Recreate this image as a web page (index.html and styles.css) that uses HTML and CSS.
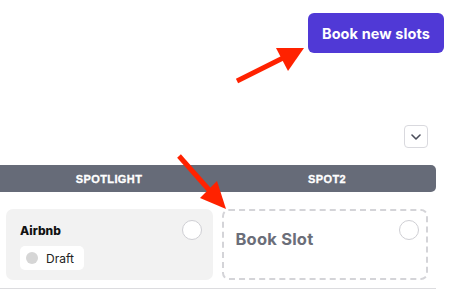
FILE: index.html
```html
<!DOCTYPE html>
<html>
<head>
<meta charset="utf-8">
<link rel="stylesheet" href="styles.css">
</head>
<body>
<div class="page">
  <header class="top">
    <button class="btn-primary">Book new slots</button>
  </header>
  <div class="toolbar">
    <button class="chev" aria-label="Expand">
      <svg width="10" height="6" viewBox="0 0 10 6"><path d="M1 1l4 4 4-4" fill="none" stroke="#4a4d5a" stroke-width="1.6" stroke-linecap="round" stroke-linejoin="round"/></svg>
    </button>
  </div>
  <section class="board">
    <div class="tabs">
      <div class="tab">SPOTLIGHT</div>
      <div class="tab">SPOT2</div>
    </div>
    <div class="slots">
      <div class="card filled">
        <div class="card-head">
          <span class="brand">Airbnb</span>
          <span class="radio"></span>
        </div>
        <span class="status"><span class="dot"></span>Draft</span>
      </div>
      <div class="card empty">
        <div class="card-head">
          <span class="book">Book Slot</span>
          <span class="radio"></span>
        </div>
      </div>
    </div>
  </section>
  <svg class="annot" width="457" height="290" viewBox="0 0 457 290">
    <line x1="237" y1="81" x2="283" y2="58" stroke="#ff2200" stroke-width="5" stroke-linecap="butt"/>
    <polygon points="276,48 304,48 288,71" fill="#ff2200"/>
    <line x1="179" y1="156" x2="210" y2="191" stroke="#ff2200" stroke-width="5"/>
    <polygon points="200,198 217,181 226,209" fill="#ff2200"/>
  </svg>
</div>
</body>
</html>
```
FILE: styles.css
```css
* { box-sizing: border-box; }
html, body { margin: 0; padding: 0; background: #fff; }
body { font-family: "Inter", "Liberation Sans", sans-serif; }
.page { position: relative; width: 457px; height: 290px; overflow: hidden; }
.top { display: flex; justify-content: flex-end; padding: 13px 13px 0 0; }
.btn-primary {
  width: 136px; height: 40px; border: 0; border-radius: 6px;
  background: #5039d6; color: #fff;
  font-family: "Inter", sans-serif; font-weight: 700; font-size: 14.5px;
  letter-spacing: 0.1px; padding: 0;
}
.toolbar { display: flex; justify-content: flex-end; width: 428px; margin-top: 72px; }
.chev {
  width: 24px; height: 23px; border: 1px solid #d9d9de; border-radius: 4px;
  background: #fff; display: flex; align-items: center; justify-content: center; padding: 0;
}
.board { width: 436px; margin-top: 17px; border-bottom: 1px solid #dcdcdf; padding-bottom: 8px; }
.tabs {
  display: grid; grid-template-columns: 1fr 1fr; height: 27px;
  background: #666b78; border-radius: 0 5px 5px 0;
}
.tab {
  display: flex; align-items: center; justify-content: center;
  color: #fff; font-family: "Liberation Sans", Arial, sans-serif; font-weight: 900;
  font-size: 11px; letter-spacing: 0.4px;
  -webkit-text-stroke: 0.3px #fff;
}
.slots { display: grid; grid-template-columns: 1fr 1fr; gap: 9px; padding: 17px 8px 0 6px; }
.card { height: 71px; border-radius: 7px; padding: 11px 11px 0 14px; }
.card.filled { background: #f2f2f2; }
.card.empty { border: 2px dashed #d4d4d8; padding: 9px 7px 0 12px; }
.card-head { display: flex; justify-content: space-between; align-items: flex-start; }
.brand { font-weight: 800; font-size: 12px; color: #111; margin-top: 3px; }
.radio { width: 20px; height: 20px; border-radius: 50%; background: #fff; border: 1px solid #cfcfd4; }
.status {
  display: inline-flex; align-items: center; gap: 8px; margin-top: 6px;
  background: #fff; border-radius: 5px; height: 24px; padding: 0 10px 0 6px;
  font-size: 12px; color: #222;
}
.dot { width: 12px; height: 12px; border-radius: 50%; background: #d6d6d6; }
.book { font-weight: 700; font-size: 16.5px; color: #6b6e79; margin-top: 9px; letter-spacing: 0.2px; }
.annot { position: absolute; left: 0; top: 0; pointer-events: none; }
```
